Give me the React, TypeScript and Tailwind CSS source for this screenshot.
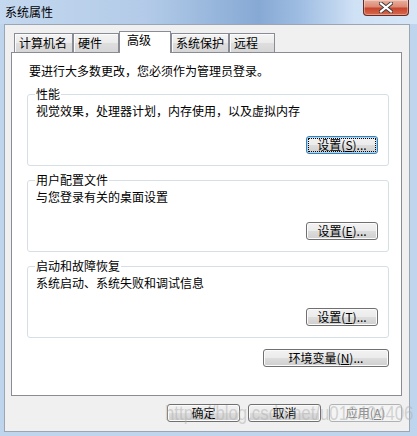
import type {ReactNode} from "react";

const tabs = [
    {label: '计算机名', width: 'w-[59px]'},
    {label: '硬件', width: 'w-[46px]'},
    {label: '高级', width: 'w-[52px]', active: true},
    {label: '系统保护', width: 'w-[58px]'},
    {label: '远程', width: 'w-[46px]'},
];

function WinButton({children, width, focused, disabled}: {children: ReactNode, width: string, focused?: boolean, disabled?: boolean}) {
    if (disabled) {
        return (
            <div className={`${width} h-[18px] flex items-center justify-center rounded-[3px] border border-[#adb2b5] bg-[#f4f4f4] text-[#838383]`}>
                {children}
            </div>
        );
    }
    return (
        <div
            className={`${width} h-[18px] flex items-center justify-center rounded-[3px] border ${focused ? 'border-[#3c7fb1] shadow-[inset_0_0_0_1px_#a8d8f5] outline-1 outline-dotted outline-black -outline-offset-[3px]' : 'border-[#707070] shadow-[inset_0_0_0_1px_#fbfbfb]'} bg-[linear-gradient(to_bottom,#f2f2f2_0%,#ebebeb_50%,#dddddd_50%,#cfcfcf_100%)]`}>
            {children}
        </div>
    );
}

function Group({title, text, button, className}: {title: string, text: string, button: ReactNode, className: string}) {
    return (
        <fieldset className={`${className} ml-[15px] mr-[12px] border border-[#d5dfe5] rounded-[3px] pl-[8px] pr-[10px] pb-[11px]`}>
            <legend className="-ml-[1px] px-[1px]">{title}</legend>
            <p className="mt-[1px]">{text}</p>
            <div className="mt-[17px] flex justify-end">{button}</div>
        </fieldset>
    );
}

export default function App() {
    return (
        <div className="relative w-[417px] h-[436px] flex flex-col overflow-hidden bg-[#bfd4ed] text-[12px] leading-[16px] text-black font-['Noto_Sans_CJK_SC','Noto_Sans',sans-serif]">
            {/* title bar */}
            <div className="h-[24px] shrink-0 flex items-start bg-[linear-gradient(to_right,#c4d8ef_0%,#b3cbe8_35%,#86a9d4_62%,#9fbde2_72%,#cfe1f5_85%,#d6e6f7_100%)]">
                <span className="pl-[5px] pt-[4px]">系统属性</span>
                <div className="ml-auto mr-[8px] w-[46px] h-[16px] flex items-center justify-center rounded-b-[4px] border border-t-0 border-[#6b2a20] bg-[linear-gradient(to_bottom,#eab0a0_0%,#dc8a74_45%,#c9452d_55%,#d56a4f_100%)] shadow-[inset_0_0_0_1px_rgba(255,255,255,0.35)]">
                    <svg width="14" height="11" viewBox="0 0 14 11">
                        <path d="M2 1.5 L12 9.5 M12 1.5 L2 9.5" stroke="#3b3b3b" strokeWidth="4" strokeLinecap="square"/>
                        <path d="M2 1.5 L12 9.5 M12 1.5 L2 9.5" stroke="#ffffff" strokeWidth="2.2" strokeLinecap="square"/>
                    </svg>
                </div>
            </div>

            {/* client area */}
            <div className="flex-1 flex pl-[4px] pr-[7px] pb-[4px]">
                <div className="flex-1 flex flex-col bg-[#f0f0f0] border border-[#9aa6b4] pt-[6px] pl-[6px] pr-[7px]">
                    <div className="relative z-10 -mb-px ml-[3px] h-[22px] flex items-end">
                        {tabs.map(tab => tab.active ? (
                            <div key={tab.label}
                                 className={`${tab.width} h-[22px] border border-b-0 border-[#898c95] bg-white pl-[7px]`}>
                                {tab.label}
                            </div>
                        ) : (
                            <div key={tab.label}
                                 className={`${tab.width} h-[19px] mb-px border border-b-0 border-[#898c95] pl-[4px] pt-[1px] bg-[linear-gradient(to_bottom,#f4f4f4_0%,#ebebeb_50%,#dedede_51%,#d6d6d6_100%)] shadow-[inset_1px_1px_0_#fcfcfc]`}>
                                {tab.label}
                            </div>
                        ))}
                    </div>

                    <div className="h-[344px] flex flex-col bg-white border border-[#898c95]">
                        <p className="mt-[10px] pl-[17px]">要进行大多数更改，您必须作为管理员登录。</p>
                        <Group className="mt-[7px]" title="性能" text="视觉效果，处理器计划，内存使用，以及虚拟内存"
                               button={<WinButton width="w-[72px]" focused>设置(<u>S</u>)...</WinButton>}/>
                        <Group className="mt-[6px]" title="用户配置文件" text="与您登录有关的桌面设置"
                               button={<WinButton width="w-[72px]">设置(<u>E</u>)...</WinButton>}/>
                        <Group className="mt-[6px]" title="启动和故障恢复" text="系统启动、系统失败和调试信息"
                               button={<WinButton width="w-[72px]">设置(<u>T</u>)...</WinButton>}/>
                        <div className="mt-[11px] mr-[12px] flex justify-end">
                            <WinButton width="w-[126px]">环境变量(<u>N</u>)...</WinButton>
                        </div>
                    </div>

                    <div className="mt-[8px] flex justify-end gap-[8px]">
                        <WinButton width="w-[73px]">确定</WinButton>
                        <WinButton width="w-[73px]">取消</WinButton>
                        <WinButton width="w-[73px]" disabled>应用(<u>A</u>)</WinButton>
                    </div>
                </div>
            </div>

            {/* watermark */}
            <span className="absolute left-[165px] top-[402px] origin-left scale-x-[0.84] whitespace-nowrap text-[20px] leading-[22px] text-[rgba(175,175,175,0.5)] font-['Liberation_Sans',sans-serif] pointer-events-none">
                https://blog.csdn.net/u010404406
            </span>
        </div>
    );
}
